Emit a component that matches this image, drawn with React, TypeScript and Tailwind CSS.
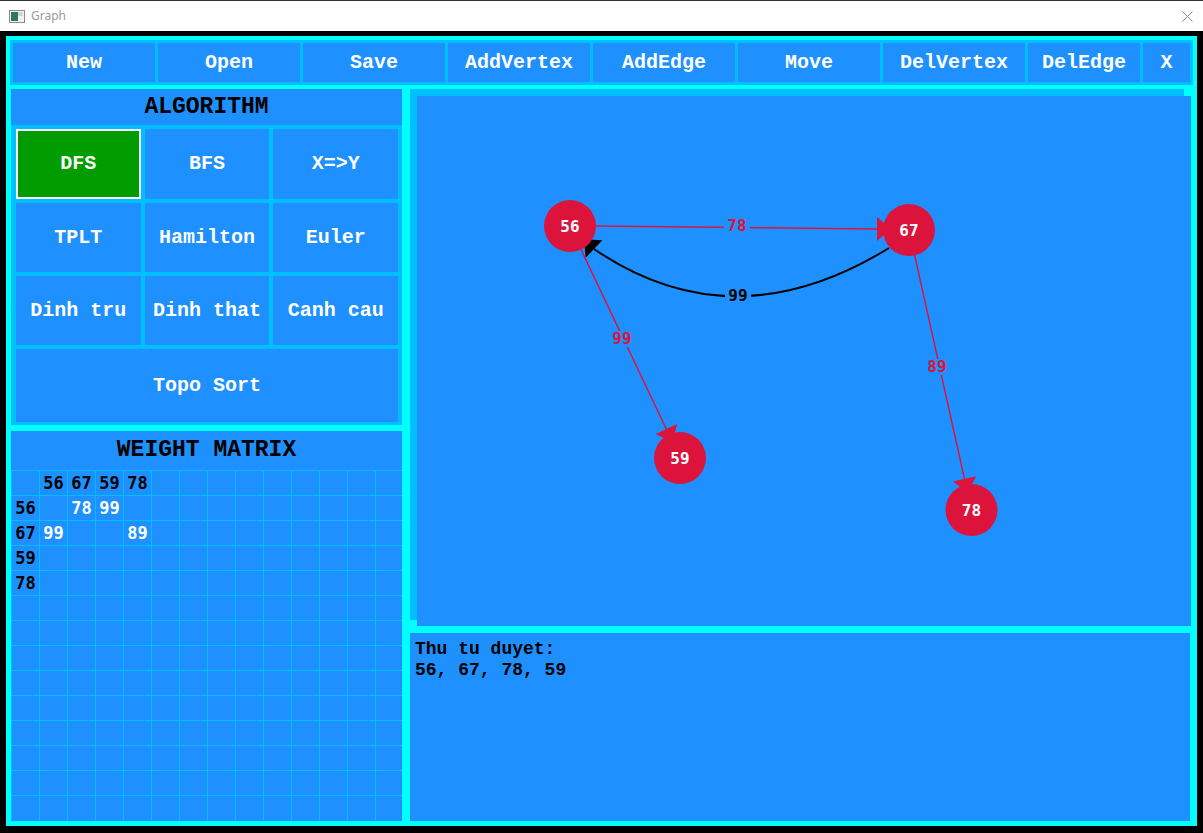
import React from "react";

const mono = "font-['Liberation_Mono','Courier_New',monospace]";

const toolbar = [
  { label: "New", w: "w-[142px]" },
  { label: "Open", w: "w-[142px]" },
  { label: "Save", w: "w-[142px]" },
  { label: "AddVertex", w: "w-[142px]" },
  { label: "AddEdge", w: "w-[142px]" },
  { label: "Move", w: "w-[142px]" },
  { label: "DelVertex", w: "w-[142px]" },
  { label: "DelEdge", w: "w-[112px]" },
  { label: "X", w: "w-[47px]" },
];

const algorithms = ["DFS", "BFS", "X=>Y", "TPLT", "Hamilton", "Euler", "Dinh tru", "Dinh that", "Canh cau"];

const matrix: string[][] = [
  ["", "56", "67", "59", "78"],
  ["56", "", "78", "99"],
  ["67", "99", "", "", "89"],
  ["59"],
  ["78"],
];

const nodes = [
  { id: "56", x: 570, y: 226 },
  { id: "67", x: 909, y: 230 },
  { id: "59", x: 680, y: 458 },
  { id: "78", x: 971.5, y: 510 },
];

const EdgeLabel = ({ x, y, text, color }: { x: number; y: number; text: string; color: string }) => (
  <g>
    <rect x={x - 13} y={y - 8} width={26} height={16} fill="#1E90FF" />
    <text
      x={x}
      y={y + 5}
      textAnchor="middle"
      fill={color}
      fontSize={16}
      fontWeight="bold"
      fontFamily="'DejaVu Sans Mono', monospace"
    >
      {text}
    </text>
  </g>
);

const GraphCanvas = () => (
  <svg width="774" height="530" viewBox="417 96 774 530" className="block">
    {/* 56 -> 67 */}
    <line x1={596} y1={226} x2={877} y2={229} stroke="#DC143C" strokeWidth={1.5} />
    <polygon points="877,217 877,241 891,229" fill="#DC143C" />
    <EdgeLabel x={737} y={226} text="78" color="#DC143C" />

    {/* 67 -> 56 */}
    <path d="M889 248 Q733 344 594 249" fill="none" stroke="#000" strokeWidth={2} />
    <polygon points="602.3,240.3 585.7,257.7 583.9,239.3" fill="#000" />
    <EdgeLabel x={738} y={296} text="99" color="#000" />

    {/* 56 -> 59 */}
    <line x1={581} y1={249.5} x2={666.3} y2={429} stroke="#DC143C" strokeWidth={1.5} />
    <polygon points="677.2,423.9 655.5,434.1 672.3,441.7" fill="#DC143C" />
    <EdgeLabel x={622} y={339} text="99" color="#DC143C" />

    {/* 67 -> 78 */}
    <line x1={914.7} y1={255.4} x2={964.5} y2={478.8} stroke="#DC143C" strokeWidth={1.5} />
    <polygon points="976.2,476.2 952.8,481.4 967.6,492.5" fill="#DC143C" />
    <EdgeLabel x={937} y={367} text="89" color="#DC143C" />

    {nodes.map((n) => (
      <g key={n.id}>
        <circle cx={n.x} cy={n.y} r={26} fill="#DC143C" />
        <text
          x={n.x}
          y={n.y + 6}
          textAnchor="middle"
          fill="#fff"
          fontSize={16}
          fontWeight="bold"
          fontFamily="'DejaVu Sans Mono', monospace"
        >
          {n.id}
        </text>
      </g>
    ))}
  </svg>
);

const App = () => {
  return (
    <div className="w-[1203px] h-[833px] bg-black flex flex-col overflow-hidden">
      {/* title bar */}
      <div className="h-[31px] bg-white border-t border-[#2a3444] flex items-center pl-[9px] pr-[10px] shrink-0">
        <svg width="16" height="13" viewBox="0 0 16 13">
          <rect x="0.5" y="0.5" width="15" height="12" fill="#f2f2f2" stroke="#8a8a8a" />
          <rect x="2" y="2" width="7" height="9" fill="#2f7a5e" />
          <rect x="9" y="2" width="5" height="4" fill="#cfd8d6" />
        </svg>
        <span className="ml-[6px] text-[12px] text-[#9a9a9a] font-['Noto_Sans',sans-serif]">Graph</span>
        <svg className="ml-auto" width="11" height="11" viewBox="0 0 11 11">
          <path d="M0.5 0.5 L10.5 10.5 M10.5 0.5 L0.5 10.5" stroke="#8a8a8a" strokeWidth="1" />
        </svg>
      </div>

      {/* client */}
      <div className="flex-1 pl-[6px] pr-[6px] pt-[5px] pb-[7px]">
        <div className={`h-full bg-[#00FFFF] pt-[4px] pl-[4px] pr-[4px] pb-[5px] flex flex-col ${mono}`}>
          {/* toolbar */}
          <div className="h-[45px] bg-[#00BFFF] p-[3px] flex gap-[3px] shrink-0">
            {toolbar.map((b) => (
              <div
                key={b.label}
                className={`${b.w} h-full bg-[#1E90FF] text-white font-bold text-[20px] flex items-center justify-center`}
              >
                {b.label}
              </div>
            ))}
          </div>

          <div className="flex-1 mt-[4px] flex min-h-0">
            {/* left column */}
            <div className="ml-[1px] w-[391px] flex flex-col">
              <div className="h-[336px] flex flex-col shrink-0">
                <div className="h-[36px] bg-[#1E90FF] flex items-center justify-center text-black font-bold text-[23px]">
                  ALGORITHM
                </div>
                <div className="flex-1 bg-[#00BFFF] pt-[4px] pl-[5px] pr-[4px] pb-[3px] grid grid-cols-3 grid-rows-[70px_69px_69px_73px] gap-[4px]">
                  {algorithms.map((a) => (
                    <div
                      key={a}
                      className={
                        a === "DFS"
                          ? "bg-[#009C00] border-2 border-white text-white font-bold text-[20px] flex items-center justify-center"
                          : "bg-[#1E90FF] text-white font-bold text-[20px] flex items-center justify-center"
                      }
                    >
                      {a}
                    </div>
                  ))}
                  <div className="col-span-3 bg-[#1E90FF] text-white font-bold text-[20px] flex items-center justify-center">
                    Topo Sort
                  </div>
                </div>
              </div>

              <div className="flex-1 mt-[6px] bg-[#1E90FF] flex flex-col min-h-0">
                <div className="h-[39px] flex items-center justify-center text-black font-bold text-[23px] shrink-0">
                  WEIGHT MATRIX
                </div>
                <div className="flex-1 overflow-hidden">
                  <div className="bg-[#00BFFF] pt-[1px] pl-[1px] grid grid-cols-[repeat(14,27px)] auto-rows-[24px] gap-[1px] w-max font-['DejaVu_Sans_Mono',monospace] font-bold text-[17px]">
                    {Array.from({ length: 14 * 14 }).map((_, i) => {
                      const r = Math.floor(i / 14);
                      const c = i % 14;
                      const v = matrix[r]?.[c] ?? "";
                      const dark = r === 0 || c === 0;
                      return (
                        <div
                          key={i}
                          className={`bg-[#1E90FF] flex items-center justify-center leading-none ${dark ? "text-black" : "text-white"}`}
                        >
                          {v}
                        </div>
                      );
                    })}
                  </div>
                </div>
              </div>
            </div>

            {/* right column */}
            <div className="ml-[8px] w-[780px] flex flex-col">
              <div className="w-[774px] h-[531px] bg-[#00BFFF] shrink-0">
                <div className="ml-[7px] mt-[7px] w-[774px] h-[530px] bg-[#1E90FF]">
                  <GraphCanvas />
                </div>
              </div>
              <div className="flex-1 mt-[13px] bg-[#1E90FF] pt-[6px] pl-[5px] text-black font-bold text-[18px] leading-[21px]">
                <div>Thu tu duyet:</div>
                <div>56, 67, 78, 59</div>
              </div>
            </div>
          </div>
        </div>
      </div>
    </div>
  );
};

export default App;
